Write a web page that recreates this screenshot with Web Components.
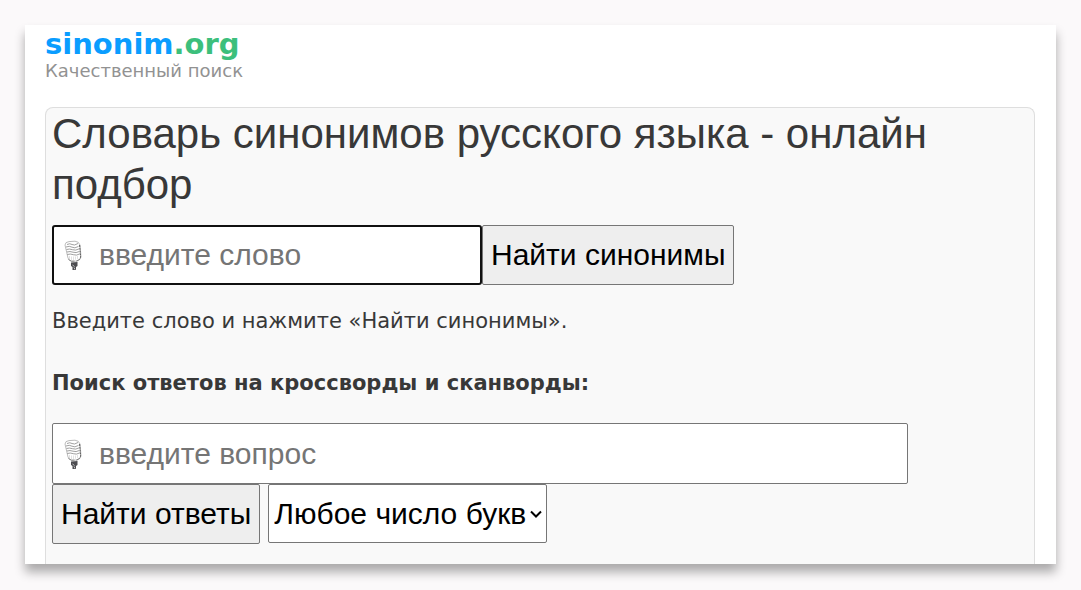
<!DOCTYPE html>
<html lang="ru">
<head>
<meta charset="utf-8">
<meta name="viewport" content="width=device-width, initial-scale=1">
<title>Словарь синонимов русского языка - онлайн подбор</title>
<style>
  * { box-sizing: border-box; }
  body {
    margin: 0;
    background: #fbf9fa;
    color: #383838;
    font-family: "DejaVu Sans", Verdana, sans-serif;
    font-size: 21px;
  }
</style>
</head>
<body>
<page-sheet>
  <site-logo slot="header"></site-logo>
  <search-panel></search-panel>
</page-sheet>

<script>
class PageSheet extends HTMLElement {
  connectedCallback() {
    this.attachShadow({ mode: 'open' }).innerHTML = `
      <style>
        :host {
          display: flex;
          flex-direction: column;
          box-sizing: border-box;
          min-height: calc(100vh - 51px);
          margin: 25px 25px 26px;
          padding: 0 21px 0 20px;
          background: #fff;
          box-shadow: 0 8px 10px rgba(0,0,0,0.32);
        }
        header {
          padding: 3px 0 25px;
        }
        main {
          display: flex;
          flex-direction: column;
          flex: 1;
        }
      </style>
      <header><slot name="header"></slot></header>
      <main><slot></slot></main>
    `;
  }
}

class SiteLogo extends HTMLElement {
  connectedCallback() {
    this.attachShadow({ mode: 'open' }).innerHTML = `
      <style>
        :host {
          display: block;
        }
        a {
          display: inline-block;
          vertical-align: top;
          color: #929292;
          text-decoration: none;
        }
        .name {
          display: block;
          color: #0a9dff;
          font-size: 29px;
          font-weight: bold;
          line-height: 32px;
        }
        .zone {
          color: #3cbf7c;
        }
        .tagline {
          display: block;
          font-size: 18px;
          line-height: 22px;
        }
      </style>
      <a href="/">
        <span class="name">sinonim<span class="zone">.org</span></span>
        <span class="tagline">Качественный поиск</span>
      </a>
    `;
  }
}

class MicIcon extends HTMLElement {
  connectedCallback() {
    this.attachShadow({ mode: 'open' }).innerHTML = `
      <style>
        :host {
          display: block;
          width: 20px;
          height: 32px;
        }
        svg {
          display: block;
        }
      </style>
      <svg width="20" height="32" viewBox="0 0 20 32" fill="none" aria-hidden="true">
        <path d="M2 5Q2 2 6 1.600L12 1.200Q16 1.500 17 5L18 17Q17.500 20 14 21L9 21.500Q6 21 5 18Z" fill="#fff" stroke="#aaa" stroke-width=".8"/>
        <path d="M16.600 5L17.600 17Q17 20 13.500 21" stroke="#555" stroke-width="1" stroke-dasharray="2 .8"/>
        <path d="M4 4.500q3-1.500 5 0t6-1M3 7q3.500-1.500 6 .2t6.500-.8M3.500 9.500q3-1 6 .2t6.500-.8M4 12q3-1 6 .2t6.500-.8M4.300 14.500q3-1 6 .2t6.500-.8" stroke="#888" stroke-width=".8"/>
        <path d="M6.500 16v3M8.500 16.500v3.500M10.500 16.500v3.500M12.500 16.500v3.200M14.500 16v3.200" stroke="#ccc" stroke-width=".6"/>
        <path d="M5.500 19.500q3 2.500 6 1.500" stroke="#777" stroke-width=".8"/>
        <path d="M8 22.500l6.500-.5v4l-1.500 1v3h-3.500v-3l-1.500-1z" fill="#4c4c50"/>
        <path d="M9.500 25l2 1.500M11 27.500l1 2" stroke="#ddd" stroke-width=".8"/>
      </svg>
    `;
  }
}

class VoiceInput extends HTMLElement {
  connectedCallback() {
    const label = this.getAttribute('placeholder');
    this.attachShadow({ mode: 'open' }).innerHTML = `
      <style>
        :host {
          display: grid;
          align-items: center;
          max-width: 100%;
        }
        input, mic-icon {
          grid-area: 1 / 1;
        }
        input {
          box-sizing: border-box;
          width: 100%;
          height: var(--input-height, 60px);
          margin: 0;
          padding: 0 6px 0 46px;
          border: 1px solid #767676;
          border-radius: 2px;
          background: #fff;
          color: #000;
          font: 30px "Liberation Sans", Arial, sans-serif;
        }
        input::placeholder {
          color: #757575;
          opacity: 1;
        }
        mic-icon {
          margin: 2px 0 0 11px;
          pointer-events: none;
        }
        :host([active]) input {
          padding: 0 5px 0 45px;
          border: 2px solid #101010;
          border-radius: 3px;
        }
        input:focus {
          outline: 1px solid #101010;
        }
      </style>
      <input type="text" aria-label="${label}" placeholder="${label}">
      <mic-icon></mic-icon>
    `;
  }
}

class SearchPanel extends HTMLElement {
  connectedCallback() {
    this.attachShadow({ mode: 'open' }).innerHTML = `
      <style>
        :host {
          display: block;
          flex: 1;
          padding: 0 6px 20px;
          border: 1px solid #dedede;
          border-bottom: 0;
          border-radius: 8px 8px 0 0;
          background: #f9f9f9;
        }
        h1 {
          margin: 0 0 15px;
          font: 42px/51px "Liberation Sans", Arial, sans-serif;
        }
        form {
          display: flex;
          flex-wrap: wrap;
        }
        p, h2 {
          margin: 0;
          font-size: 21px;
          line-height: 24px;
        }
        p {
          padding: 24px 0 38px;
        }
        h2 {
          padding-bottom: 28px;
        }
        .word {
          width: 430px;
        }
        .question {
          --input-height: 61px;
          width: 856px;
        }
        .actions {
          display: flex;
          flex-wrap: wrap;
          align-items: flex-start;
          flex-basis: 100%;
          gap: 8px;
        }
        button, select {
          box-sizing: border-box;
          height: 60px;
          margin: 0;
          border: 1px solid #767676;
          border-radius: 2px;
          color: #000;
          font: 30px "Liberation Sans", Arial, sans-serif;
        }
        button {
          padding: 0 8px;
          background: #eee;
        }
        .length {
          display: grid;
          align-items: center;
        }
        .length select, .length svg {
          grid-area: 1 / 1;
        }
        select {
          appearance: none;
          height: 59px;
          padding: 0 20px 0 5px;
          background: #fff;
        }
        .length svg {
          justify-self: end;
          margin-right: 5px;
          pointer-events: none;
        }
      </style>
      <h1>Словарь синонимов русского языка - онлайн подбор</h1>
      <form>
        <voice-input class="word" active placeholder="введите слово"></voice-input>
        <button type="button">Найти синонимы</button>
      </form>
      <p>Введите слово и нажмите «Найти синонимы».</p>
      <h2>Поиск ответов на кроссворды и сканворды:</h2>
      <form>
        <voice-input class="question" placeholder="введите вопрос"></voice-input>
        <div class="actions">
          <button type="button">Найти ответы</button>
          <div class="length">
            <select aria-label="Число букв">
              <option>Любое число букв</option>
            </select>
            <svg width="12" height="8" viewBox="0 0 12 8" aria-hidden="true">
              <path d="M1 1.500l5 5 5-5" fill="none" stroke="#000" stroke-width="2"/>
            </svg>
          </div>
        </div>
      </form>
    `;
  }
}

customElements.define('page-sheet', PageSheet);
customElements.define('site-logo', SiteLogo);
customElements.define('mic-icon', MicIcon);
customElements.define('voice-input', VoiceInput);
customElements.define('search-panel', SearchPanel);
</script>
</body>
</html>
